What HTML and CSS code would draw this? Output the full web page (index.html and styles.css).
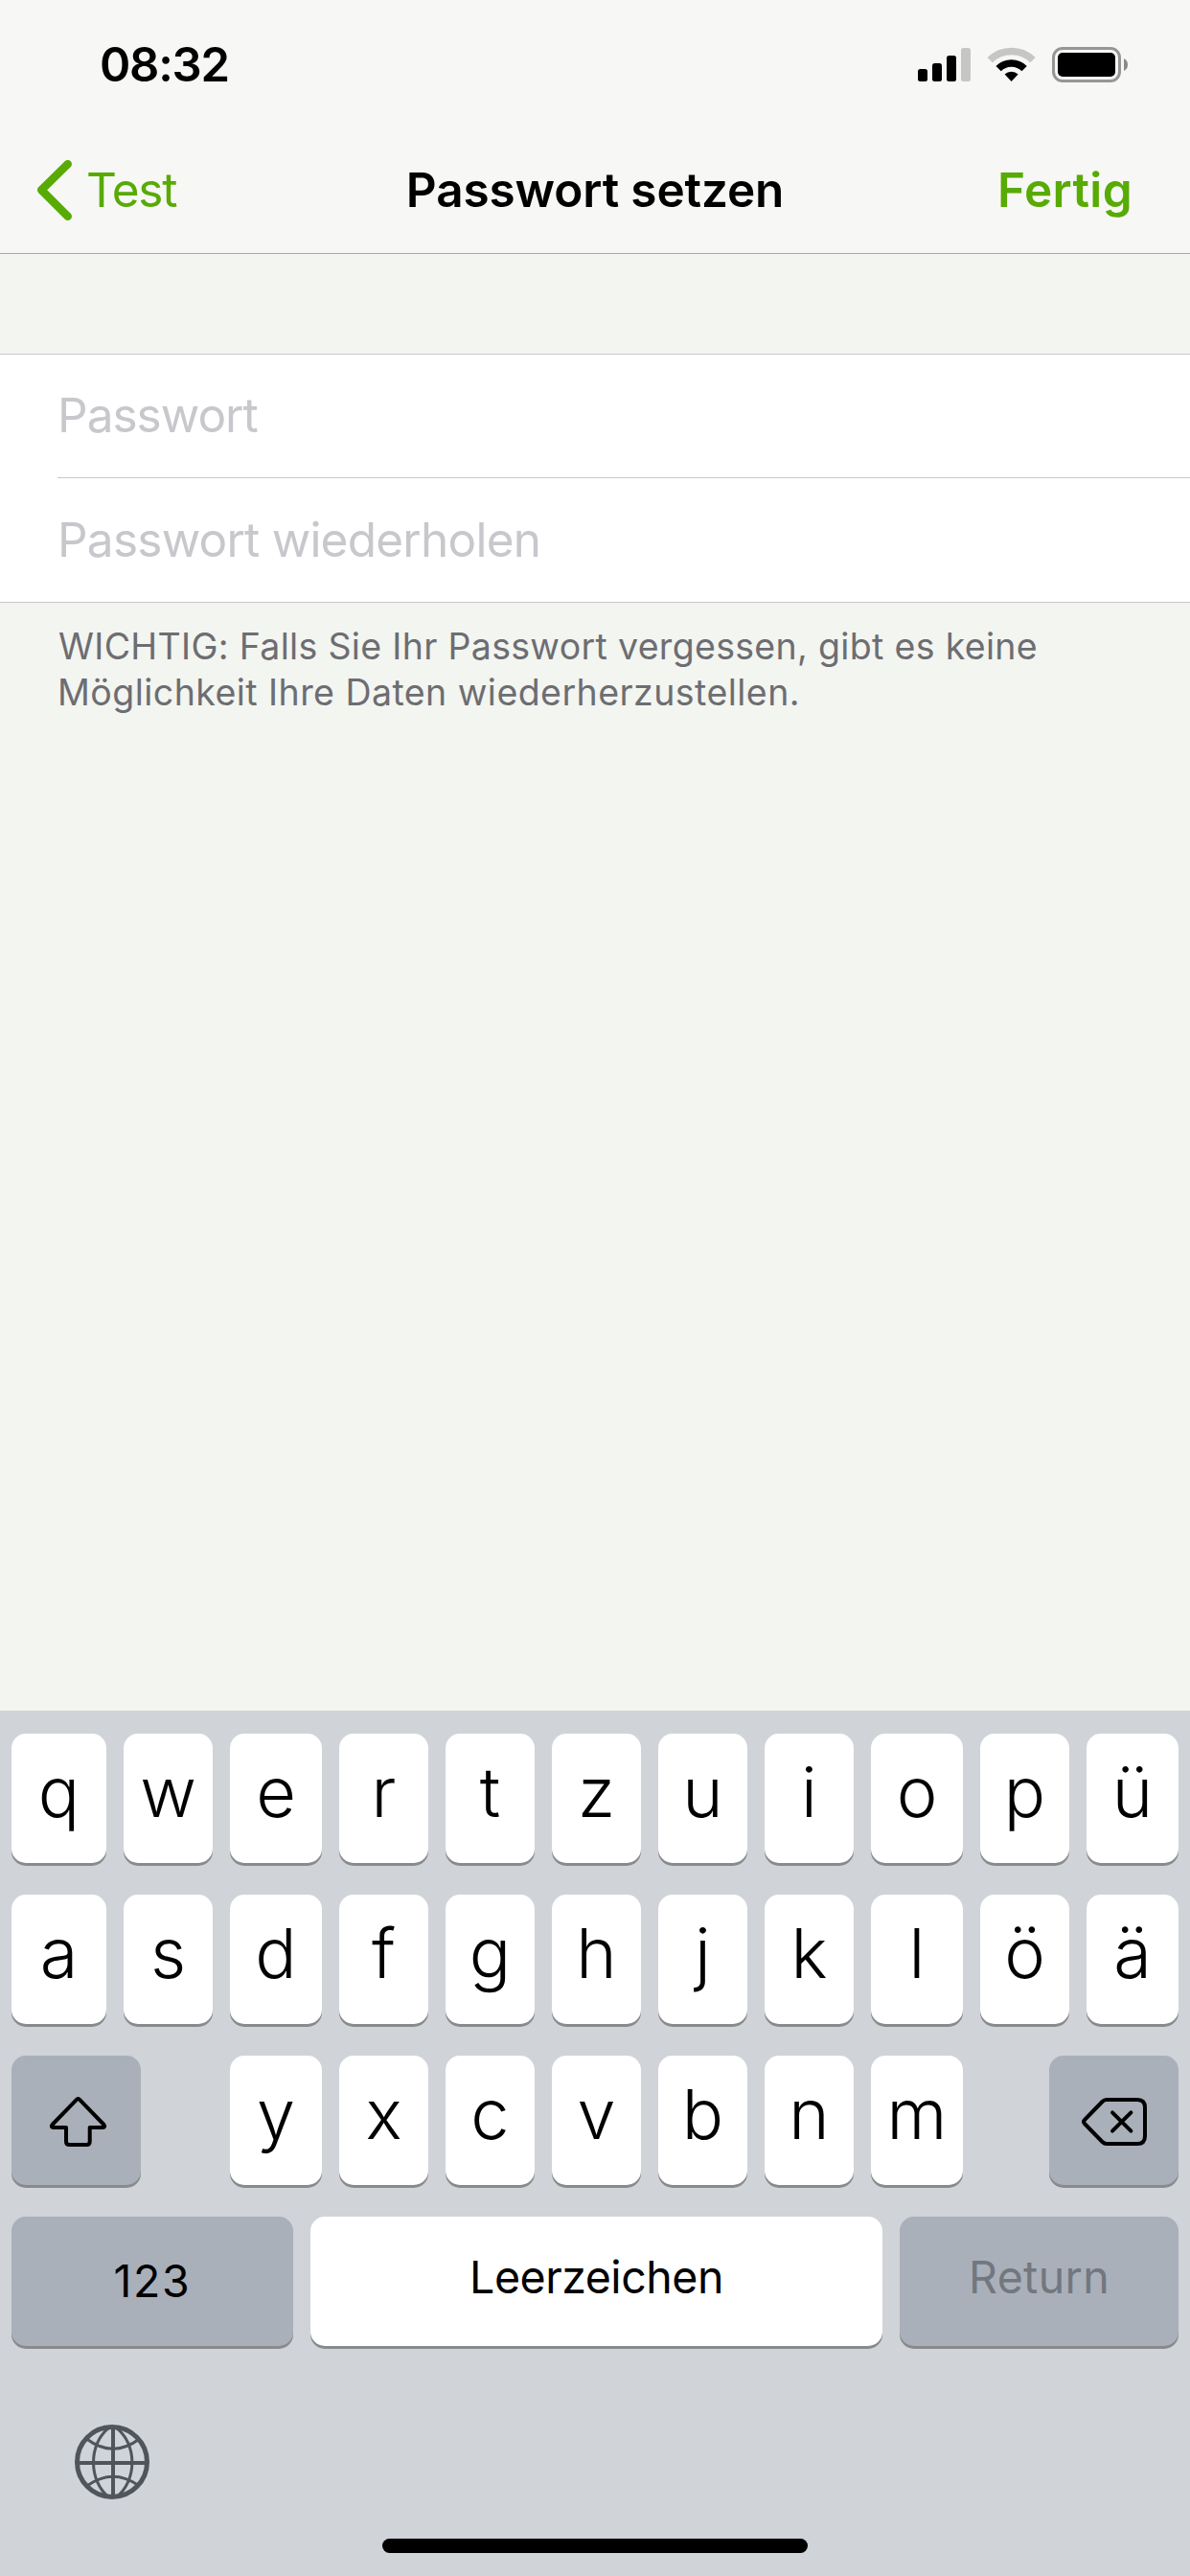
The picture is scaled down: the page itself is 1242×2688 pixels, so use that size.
FILE: index.html
```html
<!DOCTYPE html>
<html lang="de">
<head>
<meta charset="utf-8">
<title>Passwort setzen</title>
<link rel="stylesheet" href="styles.css">
</head>
<body>
<div class="screen">
  <header class="header">
    <div class="status">
      <span class="time">08:32</span>
      <svg class="status-icons" width="220" height="38" viewBox="958 49 220 38">
        <rect x="958" y="72" width="10" height="13" rx="2.5"/>
        <rect x="973" y="66" width="10" height="19" rx="2.5"/>
        <rect x="988" y="58" width="10" height="27" rx="2.5"/>
        <rect x="1003" y="50" width="10" height="35" rx="2.5" fill="#c6c6c4"/>
        <path d="M1033.2 62.7a31.7 31.7 0 0 1 44.8 0" fill="none" stroke="#c6c6c4" stroke-width="7.5"/>
        <path d="M1042.1 71.6a19 19 0 0 1 27 0" fill="none" stroke="#000" stroke-width="7.5"/>
        <path d="M1055.6 85l-7-7.4a10 10 0 0 1 14 0z"/>
        <rect x="1099.5" y="50.5" width="69" height="34" rx="9.5" fill="none" stroke="#969694" stroke-width="3"/>
        <rect x="1104" y="55" width="60" height="25" rx="5"/>
        <path d="M1173 61q4 2 4 6.500t-4 6.500z" fill="#8a8a89"/>
      </svg>
    </div>
    <nav class="nav">
      <a class="back">
        <svg width="39" height="66" viewBox="37 165 39 66"><path d="M70.700 171.300L43.200 198.300L70.700 225.700" fill="none" stroke="#58aa04" stroke-width="8.500" stroke-linecap="round" stroke-linejoin="round"/></svg>
        <span class="back-label">Test</span>
      </a>
      <h1 class="title">Passwort setzen</h1>
      <a class="done">Fertig</a>
    </nav>
  </header>

  <main class="content">
    <div class="fields">
      <div class="field field-first">Passwort</div>
      <div class="field field-second">Passwort wiederholen</div>
    </div>
    <p class="note">
      <span class="note-line">WICHTIG: Falls Sie Ihr Passwort vergessen, gibt es keine</span>
      <span class="note-line note-line-last">Möglichkeit Ihre Daten wiederherzustellen.</span>
    </p>
  </main>

  <section class="keyboard">
    <div class="row letters">
      <span class="key">q</span><span class="key">w</span><span class="key">e</span><span class="key">r</span><span class="key">t</span><span class="key">z</span><span class="key">u</span><span class="key">i</span><span class="key">o</span><span class="key">p</span><span class="key">ü</span>
    </div>
    <div class="row letters">
      <span class="key">a</span><span class="key">s</span><span class="key">d</span><span class="key">f</span><span class="key">g</span><span class="key">h</span><span class="key">j</span><span class="key">k</span><span class="key">l</span><span class="key">ö</span><span class="key">ä</span>
    </div>
    <div class="row third">
      <span class="key dark shift">
        <svg width="135" height="135" viewBox="12 2145 135 135"><path d="M80.200 2190.700Q81.500 2189.500 82.800 2190.700L108.400 2217Q110.500 2220 107 2220H93.700V2234.500Q93.700 2238 90.200 2238H72.500Q69 2238 69 2234.500V2220H56Q52.500 2220 54.600 2217Z" fill="none" stroke="#000" stroke-width="4" stroke-linejoin="round"/></svg>
      </span>
      <span class="key">y</span><span class="key">x</span><span class="key">c</span><span class="key">v</span><span class="key">b</span><span class="key">n</span><span class="key">m</span>
      <span class="key dark delete">
        <svg width="135" height="135" viewBox="1095 2145 135 135"><path d="M1155 2191H1187Q1195 2191 1195 2199V2229Q1195 2237 1187 2237H1155Q1152.500 2237 1150.500 2235L1132 2216Q1130 2214 1132 2212L1150.500 2193Q1152.500 2191 1155 2191ZM1161 2204.400L1180.400 2223.600M1180.400 2204.400L1161 2223.600" fill="none" stroke="#000" stroke-width="4" stroke-linecap="round" stroke-linejoin="round"/></svg>
      </span>
    </div>
    <div class="row bottom">
      <span class="key dark numbers">123</span>
      <span class="key space">Leerzeichen</span>
      <span class="key dark return">Return</span>
    </div>
    <div class="footer">
      <svg class="globe" width="80" height="80" viewBox="77 2529 80 80" fill="none" stroke="#50555b">
        <circle cx="117" cy="2569" r="36.500" stroke-width="5"/>
        <path d="M118 2531V2607M80 2570H154" stroke-width="4"/>
        <path d="M114 2533C92 2550 92 2589 114 2606M121 2533C143.500 2550 143.500 2589 121 2606M90.500 2545Q118 2565.500 145.500 2545M91.500 2593.500Q118 2575 144.500 2593.500" stroke-width="3"/>
      </svg>
      <div class="home"></div>
    </div>
  </section>
</div>
</body>
</html>
```
FILE: styles.css
```css
* { box-sizing: border-box; }

body {
  margin: 0;
  font-family: Inter, "Liberation Sans", sans-serif;
  color: #000;
}

.screen {
  display: flex;
  flex-direction: column;
  width: 1242px;
  height: 2688px;
  background: #f3f5f0;
  overflow: hidden;
}

.screen svg { display: block; flex: none; }

.header {
  height: 265px;
  background: #f7f7f5;
  border-bottom: 1px solid #a9aaa8;
}

.status {
  display: flex;
  align-items: center;
  justify-content: space-between;
  height: 132px;
  padding: 3px 64px 0 104px;
}

.time {
  font-size: 49px;
  font-weight: 600;
  letter-spacing: -1.25px;
}

.nav {
  display: grid;
  grid-template-columns: 1fr auto 1fr;
  align-items: center;
  height: 132px;
  padding: 0 62px 0 37px;
  font-size: 49.5px;
  white-space: nowrap;
}

.back {
  display: flex;
  align-items: center;
  gap: 14px;
  color: #58aa04;
}

.back-label { letter-spacing: -1.3px; }

.title {
  margin: 0 0 0 25px;
  font-size: inherit;
  font-weight: 600;
  letter-spacing: -0.13px;
}

.done {
  justify-self: end;
  margin-right: -2px;
  font-weight: 600;
  letter-spacing: 0.38px;
  color: #58aa04;
}

.content {
  flex: 1;
  padding-top: 104px;
}

.fields {
  height: 260px;
  padding-left: 60px;
  background: #fff;
  border-top: 1px solid #c8c7cc;
  border-bottom: 1px solid #c8c7cc;
}

.field {
  display: flex;
  align-items: center;
  height: 129px;
  padding-bottom: 2px;
  font-size: 49.5px;
  color: #c7c7cc;
}

.field-first {
  padding-bottom: 3px;
  letter-spacing: -0.98px;
  border-bottom: 1px solid #c8c7cc;
}

.field-second { letter-spacing: -0.76px; }

.note {
  margin: 0;
  padding: 22px 60px 0;
  font-size: 37.5px;
  line-height: 48px;
  letter-spacing: 0.32px;
  color: #6d6d72;
}

.note-line {
  display: block;
  padding-left: 1px;
  white-space: nowrap;
}

.note-line-last {
  padding-left: 0;
  letter-spacing: 0.45px;
}

.keyboard {
  display: flex;
  flex-direction: column;
  gap: 33px;
  height: 903px;
  padding: 24px 12px 0;
  background: #d0d3d8;
}

.row {
  display: grid;
  column-gap: 18px;
  height: 135px;
}

.letters { grid-template-columns: 99px 93px 96px 93px 93px 93px 93px 93px 96px 93px 96px; }

.third { grid-template-columns: 135px 57px 96px 93px 93px 93px 93px 93px 96px 54px 135px; }

.bottom { grid-template-columns: 294px 597px 291px; }

.key {
  display: flex;
  align-items: center;
  justify-content: center;
  height: 135px;
  padding-bottom: 13px;
  border-radius: 15px;
  background: #fff;
  box-shadow: 0 3px 0 #898a8d;
  font-size: 72px;
  font-weight: 340;
  line-height: 1;
}

.dark { background: #a9b0ba; }

.shift,
.delete { padding: 0; }

.shift + .key { grid-column: 3; }

.delete { grid-column: 11; }

.bottom .key {
  font-size: 46.5px;
  font-weight: 400;
}

.bottom .numbers {
  padding: 0;
  letter-spacing: 1.7px;
}

.bottom .space {
  padding-bottom: 9px;
  letter-spacing: -0.47px;
}

.bottom .return {
  padding-bottom: 9px;
  letter-spacing: 0.36px;
  color: #73777e;
}

.footer {
  display: flex;
  flex-direction: column;
  padding: 48px 0 0 65px;
}

.home {
  width: 444px;
  height: 15px;
  margin: 40px 0 0 322px;
  border-radius: 8px;
  background: #000;
}
```
